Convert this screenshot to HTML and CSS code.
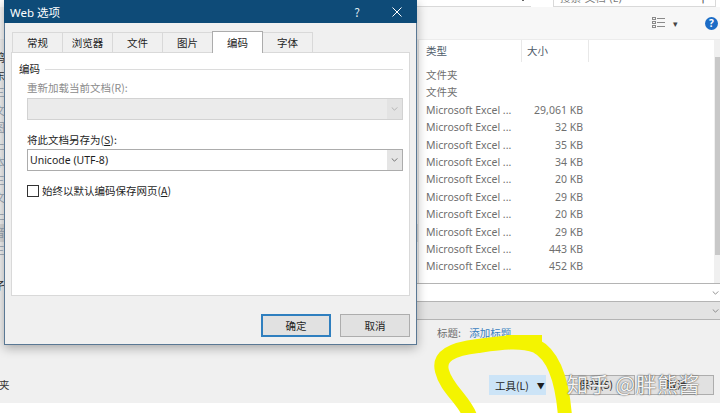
FILE: index.html
```html
<!DOCTYPE html>
<html lang="zh-CN">
<head>
<meta charset="utf-8">
<title>Web 选项</title>
<link rel="stylesheet" href="styles.css">
</head>
<body>
<div class="screen">
  <div class="explorer">
    <div class="addr-strip">
      <div class="addr-box"><svg class="chev" viewBox="0 0 8 5" width="8" height="5"><polyline points="0.5,0.5 4,4 7.5,0.5" fill="none" stroke="#666" stroke-width="1"/></svg></div>
      <div class="refresh">↻</div>
      <div class="search-box"><span class="search-text">搜索“文档”(E)</span><span class="mag">⚲</span></div>
    </div>
    <div class="toolbar">
      <svg class="view-icon" viewBox="0 0 13 12" width="13" height="12">
        <rect x="0.5" y="0.5" width="3" height="2" fill="none" stroke="#8a8a8a" stroke-width="1"/>
        <rect x="0.5" y="4.5" width="3" height="2" fill="none" stroke="#8a8a8a" stroke-width="1"/>
        <rect x="0.5" y="8.5" width="3" height="2" fill="none" stroke="#8a8a8a" stroke-width="1"/>
        <line x1="5" y1="1.5" x2="13" y2="1.5" stroke="#8a8a8a" stroke-width="1"/>
        <line x1="5" y1="5.5" x2="13" y2="5.5" stroke="#8a8a8a" stroke-width="1"/>
        <line x1="5" y1="9.5" x2="13" y2="9.5" stroke="#8a8a8a" stroke-width="1"/>
      </svg>
      <span class="caret">▾</span>
      <span class="help">?</span>
    </div>
    <div class="main">
      <div class="nav">
        <div class="nav-item">鸡</div>
        <div class="nav-item">东</div>
        <div class="nav-item light">三</div>
        <div class="nav-item light">文</div>
        <div class="nav-item light">图</div>
        <div class="nav-item light">上</div>
        <div class="nav-item light">本</div>
        <div class="nav-item light">三</div>
        <div class="nav-item light">文</div>
        <div class="nav-item light">上</div>
        <div class="nav-item sel">音</div>
        <div class="nav-item light">三</div>
        <div class="nav-item">亻</div>
        <div class="nav-item">孑</div>
      </div>
      <div class="filelist">
        <div class="list-head">
          <span class="col-type">类型</span>
          <span class="col-size">大小</span>
        </div>
        <div class="rows">
          <div class="row"><span class="c-type">文件夹</span><span class="c-size"></span></div>
          <div class="row"><span class="c-type">文件夹</span><span class="c-size"></span></div>
          <div class="row"><span class="c-type">Microsoft Excel ...</span><span class="c-size">29,061 KB</span></div>
          <div class="row"><span class="c-type">Microsoft Excel ...</span><span class="c-size">32 KB</span></div>
          <div class="row"><span class="c-type">Microsoft Excel ...</span><span class="c-size">35 KB</span></div>
          <div class="row"><span class="c-type">Microsoft Excel ...</span><span class="c-size">34 KB</span></div>
          <div class="row"><span class="c-type">Microsoft Excel ...</span><span class="c-size">20 KB</span></div>
          <div class="row"><span class="c-type">Microsoft Excel ...</span><span class="c-size">29 KB</span></div>
          <div class="row"><span class="c-type">Microsoft Excel ...</span><span class="c-size">20 KB</span></div>
          <div class="row"><span class="c-type">Microsoft Excel ...</span><span class="c-size">29 KB</span></div>
          <div class="row"><span class="c-type">Microsoft Excel ...</span><span class="c-size">443 KB</span></div>
          <div class="row"><span class="c-type">Microsoft Excel ...</span><span class="c-size">452 KB</span></div>
        </div>
      </div>
      <div class="scrollbar"><div class="thumb"></div></div>
    </div>
    <div class="fields">
      <div class="field name-field"><svg class="chev" viewBox="0 0 8 5" width="7" height="4"><polyline points="0.5,0.5 4,4 7.5,0.5" fill="none" stroke="#777" stroke-width="1"/></svg></div>
      <div class="field type-field"><svg class="chev" viewBox="0 0 8 5" width="7" height="4"><polyline points="0.5,0.5 4,4 7.5,0.5" fill="none" stroke="#777" stroke-width="1"/></svg></div>
    </div>
    <div class="meta">
      <span class="meta-label">标题:</span>
      <span class="meta-link">添加标题</span>
    </div>
    <div class="actions">
      <span class="hide-folders">夹</span>
      <span class="tools"><span>工具(L)</span><span class="tools-caret">▼</span></span>
      <span class="btn save">保存(S)</span>
      <span class="btn cancel">取消</span>
    </div>
    <div class="footer"></div>
  </div>

  <div class="dialog">
    <div class="titlebar">
      <span class="title">Web 选项</span>
      <span class="tb-help">?</span>
      <span class="tb-close"><svg viewBox="0 0 10 10" width="10" height="10"><line x1="0.5" y1="0.5" x2="9.5" y2="9.5" stroke="#fff" stroke-width="1"/><line x1="9.5" y1="0.5" x2="0.5" y2="9.5" stroke="#fff" stroke-width="1"/></svg></span>
    </div>
    <div class="dlg-body">
      <div class="tabs">
        <span class="tab">常规</span>
        <span class="tab">浏览器</span>
        <span class="tab">文件</span>
        <span class="tab">图片</span>
        <span class="tab active">编码</span>
        <span class="tab">字体</span>
      </div>
      <div class="panel">
        <div class="group-label"><span>编码</span><span class="group-line"></span></div>
        <div class="label disabled">重新加载当前文档(R):</div>
        <div class="combo combo-disabled">
          <span class="combo-text"></span>
          <span class="combo-btn"><svg viewBox="0 0 8 5" width="7" height="4"><polyline points="0.5,0.5 4,4 7.5,0.5" fill="none" stroke="#a8a8a8" stroke-width="1"/></svg></span>
        </div>
        <div class="label label-save">将此文档另存为(<u>S</u>):</div>
        <div class="combo">
          <span class="combo-text">Unicode (UTF-8)</span>
          <span class="combo-btn"><svg viewBox="0 0 8 5" width="7" height="4"><polyline points="0.5,0.5 4,4 7.5,0.5" fill="none" stroke="#555" stroke-width="1"/></svg></span>
        </div>
        <div class="check-row">
          <span class="checkbox"></span>
          <span class="check-label">始终以默认编码保存网页(<u>A</u>)</span>
        </div>
      </div>
      <div class="dlg-buttons">
        <span class="dbtn default">确定</span>
        <span class="dbtn">取消</span>
      </div>
    </div>
  </div>

  <svg class="marker" viewBox="0 0 720 413" width="720" height="413">
    <path d="M 470 416 C 464 400, 446 388, 442 371 C 438 356, 452 349, 478 346 C 500 343, 520 340, 536 346 C 552 354, 562 378, 565 416" fill="none" stroke="#f4f400" stroke-width="14" stroke-linecap="round" stroke-linejoin="round"/>
    <path d="M 512 341 L 536 341" fill="none" stroke="#f4f400" stroke-width="12" stroke-linecap="square"/>
  </svg>

  <div class="watermark">知乎 @胖熊酱</div>
</div>
</body>
</html>
```

FILE: styles.css
```css
* { box-sizing: border-box; }
html, body { margin: 0; padding: 0; }
body {
  width: 720px;
  height: 413px;
  overflow: hidden;
  background: #f0f0f0;
  font-family: "Noto Sans", "Noto Sans CJK SC", sans-serif;
  font-size: 10.5px;
  color: #1e1e1e;
}
.screen { position: relative; width: 720px; height: 413px; overflow: hidden; }

/* ---------- background explorer window ---------- */
.explorer { display: flex; flex-direction: column; height: 413px; }

.addr-strip {
  height: 7px;
  background: #fff;
  display: flex;
  align-items: flex-end;
  overflow: hidden;
  padding-left: 300px;
}
.addr-box {
  width: 231px;
  height: 24px;
  border-bottom: 1px solid #d9d9d9;
  display: flex;
  align-items: center;
  justify-content: flex-end;
  padding-right: 4px;
  padding-top: 10px;
  flex: none;
}
.refresh {
  width: 22px;
  height: 24px;
  text-align: center;
  color: #777;
  font-size: 13px;
  line-height: 24px;
  flex: none;
}
.search-box {
  width: 163px;
  height: 24px;
  border: 1px solid #d9d9d9;
  display: flex;
  align-items: center;
  justify-content: space-between;
  padding: 4px 8px 0 6px;
  color: #7a7a7a;
  flex: none;
}
.mag { font-size: 11px; color: #555; }

.toolbar {
  height: 33px;
  background: #f7f7f7;
  display: flex;
  align-items: center;
  justify-content: flex-end;
  padding-right: 2px;
  border-bottom: 1px solid #ececec;
}
.view-icon { margin-right: 8px; }
.caret { font-size: 9px; color: #444; margin-right: 27px; }
.help {
  width: 13px;
  height: 13px;
  border-radius: 50%;
  background: #1c6cc6;
  color: #fff;
  font-weight: bold;
  font-size: 10px;
  line-height: 13px;
  text-align: center;
}

.main {
  display: grid;
  grid-template-columns: 418px 296px 6px;
  height: 236px;
}
.nav { padding-top: 9px; margin-left: -6px; }
.nav-item { height: 17.5px; line-height: 17.5px; color: #333; font-family: "Noto Sans CJK SC", sans-serif; font-size: 11px; }
.nav-item.light { color: #9aa5b1; }
.nav-item.sel { background: #d9d9d9; color: #9aa5b1; }

.filelist { background: #fff; border-left: 1px solid #e3e3e3; }
.list-head { height: 22px; display: flex; align-items: center; color: #4d5a68; font-family: "Noto Sans CJK SC", sans-serif; }
.col-type { width: 103px; height: 22px; line-height: 22px; padding-left: 7px; border-right: 1px solid #e8e8e8; }
.col-size { width: 67px; height: 22px; line-height: 22px; padding-left: 5px; border-right: 1px solid #e8e8e8; }
.rows { padding-top: 5px; }
.row { height: 17.4px; line-height: 17.4px; display: flex; color: #6f6f6f; }
.c-type { width: 102px; padding-left: 7px; white-space: nowrap; overflow: hidden; }
.c-size { width: 62px; text-align: right; }

.scrollbar { background: #f0f0f0; padding: 17px 0 0 1px; }
.thumb { height: 198px; background: #c8c8c8; }

.fields { margin-top: 7px; padding-left: 100px; }
.field {
  height: 19px;
  display: flex;
  align-items: center;
  justify-content: flex-end;
  padding-right: 1px;
}
.name-field { background: #fff; border-top: 1px solid #b4b4b4; border-bottom: 1px solid #b4b4b4; }
.type-field { background: #e3e3e3; border-bottom: 1px solid #b4b4b4; height: 18px; }

.meta { height: 30px; padding: 6px 0 0 437px; line-height: 14px; font-family: "Noto Sans CJK SC", sans-serif; }
.meta-label { color: #6d6d6d; margin-right: 6px; }
.meta-link { color: #3a80c0; }

.actions {
  height: 53px;
  padding-top: 25px;
  display: flex;
  align-items: flex-start;
  font-family: "Noto Sans CJK SC", sans-serif;
}
.hide-folders { width: 490px; line-height: 20px; color: #333; margin-left: -1px; }
.tools {
  width: 57px;
  height: 20px;
  background: #cce4f7;
  display: flex;
  align-items: center;
  padding-left: 6px;
  color: #1e1e1e;
}
.tools-caret { font-size: 8px; margin-left: 8px; }
.btn {
  height: 20px;
  background: #e1e1e1;
  border: 1px solid #adadad;
  line-height: 18px;
  text-align: center;
}
.save { width: 78px; margin-left: 11px; }
.cancel { width: 74px; margin-left: 5px; }
.footer { height: 10px; background: #fff; }

/* ---------- dialog ---------- */
.dialog {
  position: absolute;
  left: 4px;
  top: 0;
  width: 413px;
  height: 345px;
  background: #f0f0f0;
  border: 1px solid #5a7894;
  border-top: none;
  box-shadow: 0 3px 10px rgba(0, 0, 0, 0.3);
  display: flex;
  flex-direction: column;
  font-family: "Noto Sans CJK SC", sans-serif;
}
.titlebar {
  height: 23px;
  background: #0e4b78;
  color: #fff;
  display: flex;
  align-items: center;
  padding-left: 6px;
  margin: 0 -1px;
}
.title { flex: 1; font-family: "Noto Sans", "Noto Sans CJK SC", sans-serif; font-size: 11.5px; }
.tb-help { width: 40px; text-align: center; font-size: 12px; color: #dfe8f0; }
.tb-close { width: 40px; height: 23px; display: flex; align-items: center; justify-content: center; }

.dlg-body { padding: 8px 6px 0 6px; }
.tabs { display: flex; align-items: flex-end; height: 21px; padding-left: 1px; position: relative; z-index: 1; }
.tab {
  width: 51px;
  height: 20px;
  margin-right: -1px;
  border: 1px solid #d9d9d9;
  border-bottom: none;
  background: #f0f0f0;
  text-align: center;
  line-height: 19px;
  color: #1e1e1e;
}
.tab.active {
  height: 22px;
  margin-bottom: -1px;
  background: #fff;
  border-color: #acacac;
  line-height: 21px;
  position: relative;
  z-index: 2;
}
.panel {
  height: 244px;
  background: #fff;
  border: 1px solid #d9d9d9;
  padding: 9px 6px 0 7px;
}
.group-label { display: flex; align-items: center; height: 14px; line-height: 14px; }
.group-line { flex: 1; height: 1px; background: #dcdcdc; margin-left: 5px; }
.label { margin: 5px 0 0 8px; height: 14px; line-height: 14px; }
.label.disabled { color: #8c8c8c; }
.label-save { margin-top: 13px; color: #1e1e1e; }
.label u, .check-label u { text-decoration-thickness: 1px; text-underline-offset: 1px; }
.combo {
  margin: 3px 0 0 8px;
  height: 22px;
  border: 1px solid #acacac;
  background: #fff;
  display: flex;
}
.label-save + .combo { margin-top: 2px; }
.combo-text { flex: 1; padding-left: 2px; line-height: 20px; font-family: "Noto Sans", sans-serif; font-size: 10.5px; }
.combo-btn {
  width: 15px;
  background: #e5e5e5;
  display: flex;
  align-items: center;
  justify-content: center;
}
.combo-disabled { background: #ebebeb; border-color: #d2d2d2; }
.combo-disabled .combo-btn { background: #e3e3e3; }
.check-row { margin: 13px 0 0 8px; display: flex; align-items: center; height: 14px; }
.checkbox { width: 12px; height: 12px; border: 1px solid #333; background: #fff; margin-right: 3px; }
.check-label { line-height: 14px; }

.dlg-buttons { display: flex; justify-content: flex-end; gap: 9px; margin-top: 18px; }
.dbtn {
  width: 70px;
  height: 23px;
  background: #e1e1e1;
  border: 1px solid #adadad;
  text-align: center;
  line-height: 21px;
}
.dbtn.default { border: 2px solid #2f7fbf; line-height: 19px; }

/* ---------- overlays ---------- */
.marker { position: absolute; left: 0; top: 0; pointer-events: none; }
.watermark {
  position: absolute;
  left: 567px;
  top: 369px;
  font-family: "Noto Sans CJK SC", sans-serif;
  font-size: 21px;
  line-height: 28px;
  color: rgba(255, 255, 255, 0.95);
  text-shadow: 0 0 1px rgba(0, 0, 0, 0.7), 0 0 2px rgba(0, 0, 0, 0.4);
  white-space: nowrap;
  letter-spacing: 0.5px;
}
```
